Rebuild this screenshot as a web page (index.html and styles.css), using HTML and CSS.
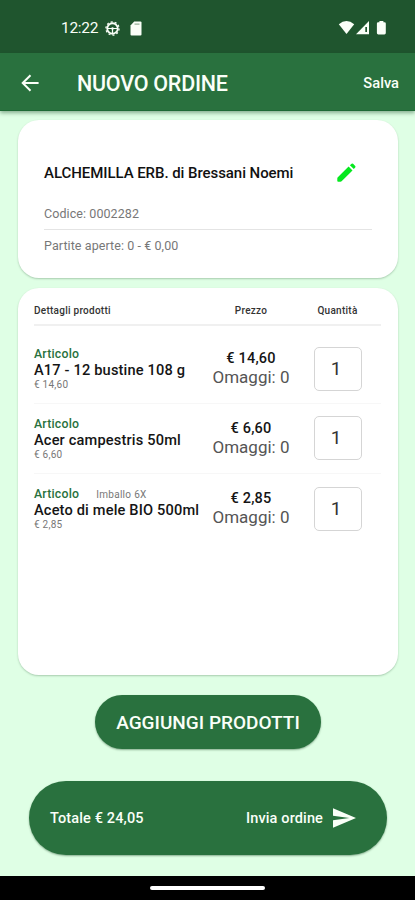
FILE: index.html
```html
<!DOCTYPE html>
<html lang="it">
<head>
<meta charset="utf-8">
<meta name="viewport" content="width=device-width, initial-scale=1">
<title>Nuovo ordine</title>
<link rel="stylesheet" href="styles.css">
</head>
<body>
<div class="status">
  <span class="clock">12:22</span>
  <svg class="ic-wheel" width="15" height="15" viewBox="0 0 16 16" fill="none" stroke="currentColor"><circle cx="8" cy="8" r="5.600" stroke-width="1.900"/><circle cx="8" cy="8" r="7" stroke-width="1.400" stroke-dasharray="2.200 2.198"/><path d="M3 8h10M8 8v5" stroke-width="1.300"/><circle cx="8" cy="8" r="1.300" fill="currentColor" stroke="none"/></svg>
  <svg class="ic-sd" width="12" height="15" viewBox="0 0 12 15"><path d="M4.200 0.500H10.400Q11.500 .5 11.500 1.600V13.400Q11.500 14.500 10.400 14.500H1.600Q.5 14.500 .5 13.400V4.400Z" fill="currentColor"/><path d="M4.500 3.100h5" stroke="#7d9c80" stroke-width="1"/></svg>
  <svg class="ic-signal" width="50" height="16" viewBox="0 0 50 16" fill="currentColor"><path d="M.8 4.200Q8.500-2 16.200 4.200L8.500 14Z"/><path d="M18 14.300L31 1V14.300Z"/><path d="M27.300 7h1.700v5h-1.700Z" fill="#1f552e"/><path d="M41.400 1h4v1.300h1.100q1.300 0 1.300 1.300v9.500q0 1.400-1.400 1.400h-6.100q-1.400 0-1.400-1.400V3.600q0-1.300 1.300-1.300h1.200Z"/></svg>
</div>
<header class="appbar">
  <svg class="back" width="18" height="18" viewBox="0 0 18 18" fill="none" stroke="currentColor" stroke-width="2"><path d="M9.500 1.200 1.700 9l7.800 7.800M2 9h15.600"/></svg>
  <h1 class="title"><span>NUOVO ORDINE</span></h1>
  <span class="save">Salva</span>
</header>
<main class="screen">
  <section class="card customer">
    <div class="customer-head">
      <h2 class="name">ALCHEMILLA ERB. di Bressani Noemi</h2>
      <svg class="pencil" width="19" height="19" viewBox="0 0 19 19" fill="#05e81f"><path d="M11.600 3.500 15.500 7.400 4.600 18.300Q4.200 18.700 3.500 18.700H1.200Q.3 18.700 .3 17.900V15.500Q.3 14.800 .8 14.300ZM12.900 2.200 14.600.8Q15.400.1 16.100.8L18.200 2.900Q18.900 3.600 18.200 4.400L16.800 6.100Z"/></svg>
    </div>
    <p class="code">Codice: 0002282</p>
    <p class="open">Partite aperte: 0 - € 0,00</p>
  </section>
  <section class="card products">
    <div class="grid head"><span class="h1">Dettagli prodotti</span><span class="h2">Prezzo</span><span class="h3">Quantità</span></div>
    <div class="grid row">
      <div class="item"><div class="tag">Articolo</div><div class="prod">A17 - 12 bustine 108 g</div><div class="unit">€ 14,60</div></div>
      <div class="price"><b>€ 14,60</b><span>Omaggi: 0</span></div>
      <div class="qty">1</div>
    </div>
    <div class="grid row">
      <div class="item"><div class="tag">Articolo</div><div class="prod">Acer campestris 50ml</div><div class="unit">€ 6,60</div></div>
      <div class="price"><b>€ 6,60</b><span>Omaggi: 0</span></div>
      <div class="qty">1</div>
    </div>
    <div class="grid row">
      <div class="item"><div class="tag">Articolo<span class="pack">Imballo 6X</span></div><div class="prod">Aceto di mele BIO 500ml</div><div class="unit">€ 2,85</div></div>
      <div class="price"><b>€ 2,85</b><span>Omaggi: 0</span></div>
      <div class="qty">1</div>
    </div>
  </section>
  <div class="add"><span>AGGIUNGI PRODOTTI</span></div>
  <div class="total">
    <span class="sum">Totale € 24,05</span>
    <span class="send">Invia ordine</span>
    <svg class="plane" width="23" height="20" viewBox="2 3 21 18" fill="currentColor"><path d="M2 21 23 12 2 3v7l15 2-15 2z"/></svg>
  </div>
</main>
<footer class="nav"><i></i></footer>
</body>
</html>
```
FILE: styles.css
```css
* { box-sizing: border-box; }
body { margin: 0; width: 415px; height: 900px; overflow: hidden; display: flex; flex-direction: column; font-family: Roboto, "Liberation Sans", sans-serif; background: #dfffe5; color: #1c1c1c; }
h1, h2, p { margin: 0; font-weight: 500; }
span, h2, p { white-space: nowrap; }
.status { height: 53px; flex: none; background: #1f552e; color: #fafff8; display: flex; align-items: center; padding: 3px 27px 0 61px; }
.clock { font-size: 15.5px; width: 44px; letter-spacing: -.3px; }
.ic-sd { margin-left: 10px; }
.ic-signal { margin-left: auto; }
.appbar { height: 58px; flex: none; background: #29713e; color: #fafff8; display: flex; align-items: center; padding: 2px 16px 0 21px; border-bottom: 1px solid #1e6a35; box-shadow: 0 2px 4px rgba(0,50,15,.4); z-index: 1; }
.title { font-size: 21.5px; margin-left: 38px; letter-spacing: -.25px; padding-top: 1px; }
.save { margin-left: auto; font-size: 14.7px; font-weight: 500; }
.screen { flex: 1; padding: 9px 17px 0 18px; display: flex; flex-direction: column; }
.card { background: #fff; border-radius: 21px; box-shadow: 0 1px 2px rgba(0,50,15,.25); flex: none; }
.customer { height: 158px; margin-bottom: 10px; padding: 42px 26px 0; }
.customer-head { display: flex; align-items: center; height: 21px; }
.name { font-size: 15px; letter-spacing: -.06px; color: #111; }
.pencil { margin-left: auto; margin-right: 16px; }
.code, .open { font-size: 12.5px; letter-spacing: .08px; font-weight: 400; color: #777; }
.code { height: 47px; padding-top: 23px; line-height: 15px; border-bottom: 1px solid #e4e4e4; }
.open { padding-top: 8px; line-height: 15px; }
.products { height: 387px; padding: 0 17px 0 16px; }
.grid { display: grid; grid-template-columns: 167px 100px 75px; align-items: center; }
.head { height: 38px; border-bottom: 2px solid #f0f0f0; padding-top: 8px; font-size: 10px; letter-spacing: .26px; font-weight: 500; color: #333; }
.h2, .h3 { text-align: center; }
.h3 { margin-left: -2px; }
.row { height: 69.750px; border-bottom: 1px solid #f7f7f7; }
.head + .row { height: 78px; padding-top: 8px; }
.row:last-child { border-bottom: 0; }
.item { white-space: nowrap; }
.tag { font-size: 12.3px; letter-spacing: .2px; line-height: 15px; font-weight: 500; color: #28713d; }
.pack { font-size: 10px; letter-spacing: .3px; font-weight: 400; color: #777; margin-left: 17px; }
.prod { font-size: 14.6px; letter-spacing: .17px; line-height: 17px; font-weight: 500; color: #151515; }
.unit { font-size: 10px; letter-spacing: .25px; line-height: 11px; color: #777; }
.price { text-align: center; font-size: 17px; line-height: 19px; color: #555; }
.price b { display: block; font-size: 14.5px; letter-spacing: .2px; font-weight: 500; line-height: 18px; color: #151515; }
.qty { width: 48px; height: 44px; margin-left: 13px; border: 1px solid #d5d5d5; border-radius: 5px; text-align: center; padding-right: 4px; font-size: 19px; line-height: 41px; color: #333; }
.add { align-self: center; height: 54px; width: 226px; margin: 20px 0 32px; border-radius: 27px; background: #29713e; color: #fafff8; font-size: 19px; font-weight: 500; display: flex; align-items: center; justify-content: center; box-shadow: 0 1px 2px rgba(0,50,15,.4); flex: none; }
.total { height: 74px; margin: 0 11px; border-radius: 37px; background: #29713e; color: #fafff8; display: flex; align-items: center; padding: 0 31px 0 21px; font-size: 14.5px; letter-spacing: .13px; font-weight: 500; box-shadow: 0 1px 2px rgba(0,50,15,.4); flex: none; }
.send { margin-left: auto; }
.plane { margin-left: 10px; }
.nav { height: 24px; flex: none; background: #000; display: flex; justify-content: center; align-items: center; }
.nav i { width: 115px; height: 4px; border-radius: 2px; background: #fff; }
```
